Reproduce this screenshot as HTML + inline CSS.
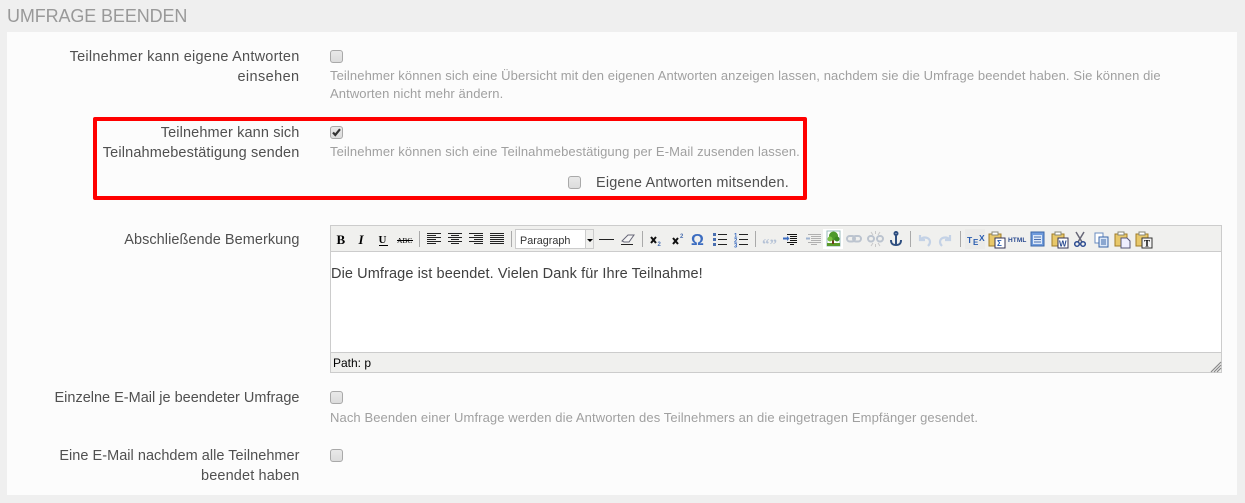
<!DOCTYPE html>
<html lang="de"><head><meta charset="utf-8"><title>Umfrage beenden</title>
<style>
html,body{margin:0;padding:0;width:1245px;height:503px;overflow:hidden;background:#efefef;font-family:"Liberation Sans",sans-serif}
.a{position:absolute;white-space:nowrap}
#panel{position:absolute;left:7px;top:32px;width:1230px;height:463px;background:#fcfcfc}
.l{font-size:14.5px;color:#505050;right:945.5px;line-height:20px;text-align:right}
.h{font-size:13px;color:#a0a0a0;left:330px;line-height:18px;letter-spacing:.1px}
.c{position:absolute;width:11px;height:11px;border:1px solid #a9a9a9;border-radius:3px;background:linear-gradient(#e9e9e9,#dcdcdc)}
</style></head><body>
<div class="a" style="left:7px;top:5px;font-size:18px;line-height:22px;color:#999;letter-spacing:-.12px">UMFRAGE BEENDEN</div>
<div id="panel"></div>

<div class="a l" style="top:47px"><span style="letter-spacing:.23px">Teilnehmer kann eigene Antworten</span><br><span style="letter-spacing:.4px">einsehen</span></div>
<div class="c" style="left:330px;top:50px"></div>
<div class="a h" style="top:67px">Teilnehmer können sich eine Übersicht mit den eigenen Antworten anzeigen lassen, nachdem sie die Umfrage beendet haben. Sie können die</div>
<div class="a h" style="top:85px">Antworten nicht mehr ändern.</div>

<div class="a" style="left:93px;top:117px;width:706px;height:75px;border:4px solid #f00;border-radius:2px"></div>
<div class="a l" style="top:123px"><span style="letter-spacing:.13px">Teilnehmer kann sich</span><br><span style="letter-spacing:.15px">Teilnahmebestätigung senden</span></div>
<div class="c" style="left:330px;top:126px"></div>
<svg class="a" style="left:330px;top:126px" width="13" height="13"><path d="M3 6.5L5.3 9 10 3.2" fill="none" stroke="#333" stroke-width="2.2"/></svg>
<div class="a h" style="top:143px">Teilnehmer können sich eine Teilnahmebestätigung per E-Mail zusenden lassen.</div>
<div class="c" style="left:568px;top:176px"></div>
<div class="a" style="left:596px;top:173px;font-size:14.5px;line-height:20px;color:#505050;letter-spacing:.16px">Eigene Antworten mitsenden.</div>

<div class="a l" style="top:230px;letter-spacing:.05px">Abschließende Bemerkung</div>

<div class="a" style="left:330px;top:225px;width:890px;height:146px;border:1px solid #ccc;background:#fff"></div>
<div class="a" style="left:331px;top:226px;width:890px;height:25px;background:#f0f0ee;border-bottom:1px solid #ccc"></div>
<div class="a" style="left:331px;top:352px;width:890px;height:19px;background:#f0f0ee;border-top:1px solid #ccc"></div>
<div class="a" style="left:333px;top:356px;font-size:12px;line-height:14px;color:#000">Path: p</div>
<div class="a" style="left:331px;top:265px;font-size:14.5px;line-height:18px;color:#404040;letter-spacing:.1px">Die Umfrage ist beendet. Vielen Dank für Ihre Teilnahme!</div>

<svg class="a" style="left:0;top:0" width="1245" height="503" font-family="Liberation Sans, sans-serif">
<g stroke="#aaa" stroke-width="1"><path d="M419.5 231v16M511.5 231v16M642.5 231v16M755.5 231v16M910.5 231v16M960.5 231v16"/></g>
<text x="336.500" y="244" font-family="Liberation Serif, serif" font-weight="700" font-size="13">B</text>
<text x="358.500" y="244" font-family="Liberation Serif, serif" font-weight="700" font-style="italic" font-size="13">I</text>
<text x="378.500" y="243" font-weight="700" font-size="11" font-family="Liberation Serif, serif">U</text><path d="M379 245.500h9" stroke="#000"/>
<text x="397" y="243" font-size="7.500" font-family="Liberation Serif, serif">ABC</text><path d="M397 240.500h16" stroke="#000"/>
<g stroke="#222" stroke-width="1">
<path d="M427 233.500h14M427 235.500h9M427 237.500h14M427 239.500h9M427 241.500h14M427 243.500h9"/>
<path d="M448 233.500h14M451 235.500h8M448 237.500h14M451 239.500h8M448 241.500h14M451 243.500h8"/>
<path d="M469 233.500h14M474 235.500h9M469 237.500h14M474 239.500h9M469 241.500h14M474 243.500h9"/>
<path d="M490 233.500h14M490 235.500h14M490 237.500h14M490 239.500h14M490 241.500h14M490 243.500h14"/>
</g>
<rect x="515.500" y="229.500" width="78" height="19" fill="#fff" stroke="#ccc"/>
<rect x="586" y="230" width="7" height="18" fill="#f0f0ee"/><path d="M585.500 230v18" stroke="#ccc"/>
<path d="M587 239h6l-3 3z" fill="#000"/>
<text x="520" y="244" font-size="10.800" fill="#333">Paragraph</text>
<path d="M599 239.500h15" stroke="#222"/>
<path d="M622 241l6-6h6l-5 7h-5z" fill="#f4f4f4" stroke="#667"/><path d="M621 244.500h12" stroke="#222"/>
<path d="M651 237l5 6M656 237l-5 6" stroke="#111" stroke-width="2"/><text x="657.500" y="246" font-size="6" font-weight="700" fill="#4a6fb0">2</text>
<path d="M673 238l5 6M678 238l-5 6" stroke="#111" stroke-width="2"/><text x="680" y="238" font-size="6" font-weight="700" fill="#4a6fb0">2</text>
<text x="691" y="245" font-size="16" font-weight="700" fill="#3b6cc0">Ω</text>
<g fill="#4a6fb0"><rect x="713" y="233" width="3" height="3"/><rect x="713" y="238" width="3" height="3"/><rect x="713" y="243" width="3" height="3"/></g>
<path d="M718 234.500h9M718 239.500h9M718 244.500h9M739 234.500h9M739 239.500h9M739 244.500h9" stroke="#222"/>
<text x="734" y="237.500" font-size="6" font-weight="700" fill="#3b6cc0">1</text><text x="734" y="242.500" font-size="6" font-weight="700" fill="#3b6cc0">2</text><text x="734" y="247.500" font-size="6" font-weight="700" fill="#3b6cc0">3</text>
<text x="762" y="249" font-size="15" font-weight="700" fill="#b5c2d6" font-family="Liberation Serif, serif">“”</text>
<path d="M787 234.500h10M790 236.500h7M790 238.500h7M790 240.500h7M787 242.500h10M790 244.500h4" stroke="#111"/><path d="M783 238.500h5" stroke="#3b6cc0" stroke-width="2"/><path d="M787 236l2.500 2.500-2.500 2.500z" fill="#3b6cc0"/>
<path d="M808 234.500h13M811 236.500h10M811 238.500h10M811 240.500h10M808 242.500h13M811 244.500h6" stroke="#b0b0b0"/><path d="M806 238.500h4" stroke="#a0b4d0" stroke-width="2"/>
<rect x="823" y="229" width="20" height="20" fill="#fff"/>
<rect x="827" y="231" width="13" height="15" fill="#fff" stroke="#9bb"/><path d="M827 243h13v3h-13z" fill="#5a9a2a"/><path d="M833 238v6" stroke="#6b3f1a" stroke-width="2"/><circle cx="833.500" cy="236" r="4.500" fill="#4e9a2d"/><circle cx="830" cy="239" r="2.500" fill="#7bc043"/><circle cx="837" cy="239" r="2.500" fill="#3c8a25"/>
<g fill="none" stroke="#bcc4cf" stroke-width="2"><rect x="847" y="236" width="8" height="5.500" rx="2.700"/><rect x="853" y="236" width="8" height="5.500" rx="2.700"/><rect x="868" y="236" width="6" height="5.500" rx="2.700"/><rect x="877" y="236" width="6" height="5.500" rx="2.700"/></g>
<path d="M875.500 231v3M875.500 244v3M871 232l2 3M880 232l-2 3M871 246l2-3M880 246l-2-3" stroke="#c8c8c8"/>
<g fill="none" stroke="#2f4f80" stroke-width="2"><circle cx="896" cy="233.500" r="1.500"/><path d="M896 235v10M891 240c0 4 2 5 5 5s5-1 5-5"/></g>
<g fill="none" stroke="#c4d2e6" stroke-width="2.200"><path d="M920 235v5h5M920 240c3-4 10-3 10 2 0 2-1 3-2 4"/><path d="M950 235v5h-5M950 240c-3-4-10-3-10 2 0 2 1 3 2 4"/></g>
<rect x="965" y="229" width="20" height="20" fill="#ebebe9"/>
<text x="967" y="243" font-size="8.500" font-weight="700" fill="#2a5db0">T</text><text x="973" y="245" font-size="8" font-weight="700" fill="#2a5db0">E</text><text x="979" y="241" font-size="8.500" font-weight="700" fill="#2a5db0">X</text>
<g><rect x="989" y="234" width="12" height="12" fill="#e8c86a" stroke="#a07c28"/><rect x="992" y="232" width="6" height="3" fill="#fff" stroke="#887"/></g>
<rect x="995" y="238" width="10" height="10" fill="#fff" stroke="#335"/><text x="997" y="246" font-size="8" font-weight="700" fill="#2a5db0">Σ</text>
<text x="1008" y="242" font-size="6.500" font-weight="700" fill="#2a4a90" letter-spacing=".1">HTML</text>
<rect x="1031" y="232" width="13" height="14" fill="#6f9bdc" stroke="#3a66a8"/><rect x="1033" y="235" width="9" height="9" fill="#dce8f8"/><path d="M1034 237h7M1034 239.500h7M1034 242h7" stroke="#4a6fb0"/>
<rect x="1052" y="234" width="12" height="12" fill="#e8c86a" stroke="#a07c28"/><rect x="1055" y="232" width="6" height="3" fill="#fff" stroke="#887"/>
<rect x="1058" y="238" width="10" height="10" fill="#fff" stroke="#335"/><text x="1059" y="246.500" font-size="8" font-weight="700" fill="#2a4a90">W</text>
<g fill="none"><path d="M1076 232l6 10M1084 232l-6 10" stroke="#667" stroke-width="1.500"/><circle cx="1077" cy="244" r="2.300" stroke="#2a4a90" stroke-width="1.500"/><circle cx="1083" cy="244" r="2.300" stroke="#2a4a90" stroke-width="1.500"/></g>
<rect x="1095" y="233" width="8" height="10" fill="#fff" stroke="#6a8cc0"/><rect x="1099" y="237" width="9" height="10" fill="#dce8f8" stroke="#3a66a8"/><path d="M1101 240h5M1101 242h5M1101 244h5" stroke="#3a66a8"/>
<rect x="1115" y="234" width="12" height="12" fill="#e8c86a" stroke="#a07c28"/><rect x="1118" y="232" width="6" height="3" fill="#fff" stroke="#887"/>
<path d="M1121 238h6l3 3v7h-9z" fill="#eef" stroke="#557"/>
<rect x="1136" y="234" width="12" height="12" fill="#e8c86a" stroke="#a07c28"/><rect x="1139" y="232" width="6" height="3" fill="#fff" stroke="#887"/>
<rect x="1142" y="238" width="10" height="10" fill="#f4f4f4" stroke="#333"/><text x="1144" y="246.500" font-size="9" font-weight="700" font-family="Liberation Serif, serif">T</text>
<path d="M1211 372l10-10M1214 372l7-7M1217 372l4-4" stroke="#888" stroke-width="1.200"/>
</svg>

<div class="a l" style="top:388px">Einzelne E-Mail je beendeter Umfrage</div>
<div class="c" style="left:330px;top:391px"></div>
<div class="a h" style="top:409px">Nach Beenden einer Umfrage werden die Antworten des Teilnehmers an die eingetragen Empfänger gesendet.</div>

<div class="a l" style="top:446px"><span style="letter-spacing:.03px">Eine E-Mail nachdem alle Teilnehmer</span><br><span style="letter-spacing:.13px">beendet haben</span></div>
<div class="c" style="left:330px;top:449px"></div>
</body></html>
